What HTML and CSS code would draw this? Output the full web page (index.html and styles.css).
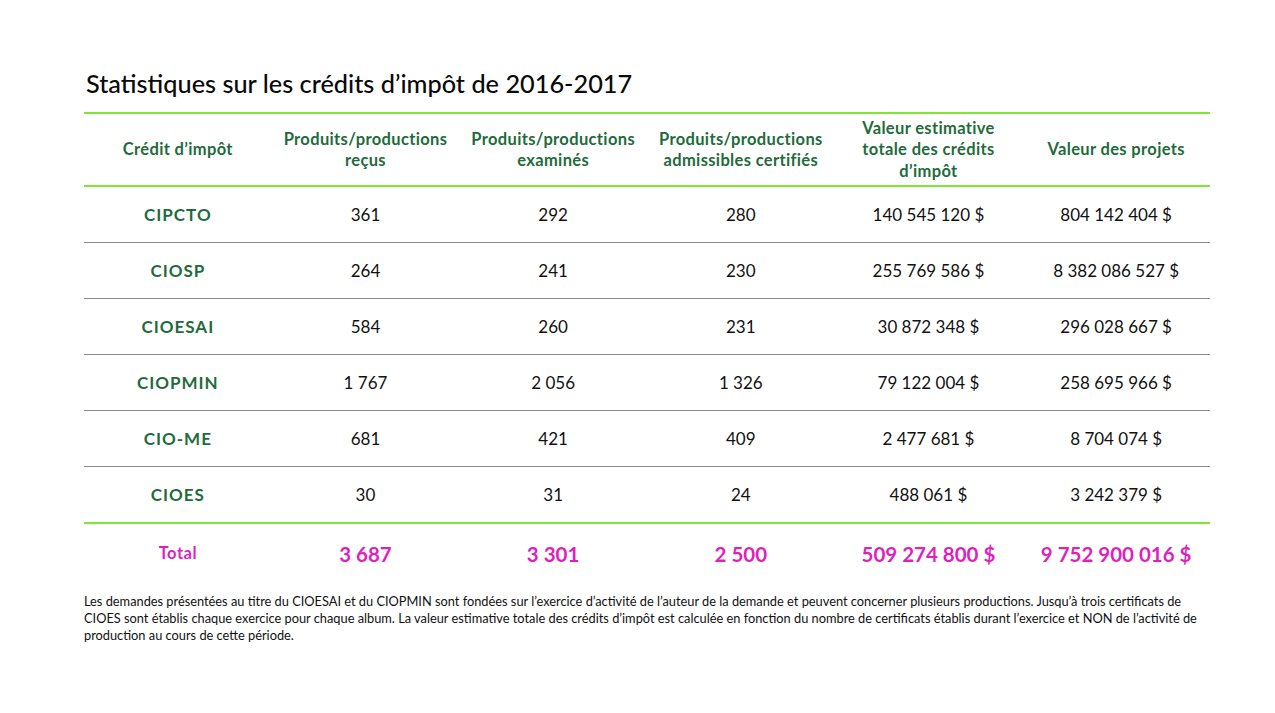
FILE: index.html
```html
<!DOCTYPE html>
<html lang="fr">
<head>
<meta charset="utf-8">
<title>Statistiques sur les crédits d'impôt de 2016-2017</title>
<link rel="stylesheet" href="styles.css">
</head>
<body>
<main class="page">
  <h1 class="title">Statistiques sur les crédits d’impôt de 2016-2017</h1>
  <table class="stats">
    <thead>
      <tr>
        <th>Crédit d’impôt</th>
        <th>Produits/productions<br>reçus</th>
        <th>Produits/productions<br>examinés</th>
        <th>Produits/productions<br>admissibles certifiés</th>
        <th>Valeur estimative<br>totale des crédits<br>d’impôt</th>
        <th>Valeur des projets</th>
      </tr>
    </thead>
    <tbody>
      <tr><td class="label">CIPCTO</td><td>361</td><td>292</td><td>280</td><td>140 545 120 $</td><td>804 142 404 $</td></tr>
      <tr><td class="label">CIOSP</td><td>264</td><td>241</td><td>230</td><td>255 769 586 $</td><td>8 382 086 527 $</td></tr>
      <tr><td class="label">CIOESAI</td><td>584</td><td>260</td><td>231</td><td>30 872 348 $</td><td>296 028 667 $</td></tr>
      <tr><td class="label">CIOPMIN</td><td>1 767</td><td>2 056</td><td>1 326</td><td>79 122 004 $</td><td>258 695 966 $</td></tr>
      <tr><td class="label">CIO-ME</td><td>681</td><td>421</td><td>409</td><td>2 477 681 $</td><td>8 704 074 $</td></tr>
      <tr><td class="label">CIOES</td><td>30</td><td>31</td><td>24</td><td>488 061 $</td><td>3 242 379 $</td></tr>
    </tbody>
    <tfoot>
      <tr><td class="total-label">Total</td><td>3 687</td><td>3 301</td><td>2 500</td><td>509 274 800 $</td><td>9 752 900 016 $</td></tr>
    </tfoot>
  </table>
  <p class="note">Les demandes présentées au titre du CIOESAI et du CIOPMIN sont fondées sur l’exercice d’activité de l’auteur de la demande et peuvent concerner plusieurs productions. Jusqu’à trois certificats de CIOES sont établis chaque exercice pour chaque album. La valeur estimative totale des crédits d’impôt est calculée en fonction du nombre de certificats établis durant l’exercice et NON de l’activité de production au cours de cette période.</p>
</main>
</body>
</html>
```
FILE: styles.css
```css
html, body {
  margin: 0;
  padding: 0;
  background: #ffffff;
}
body {
  font-family: Lato, "Noto Sans", sans-serif;
  color: #111;
}
.page {
  width: 1126px;
  margin-left: 84px;
  padding-top: 66px;
}
.title {
  margin: 0 0 0 2px;
  font-size: 25.3px;
  font-weight: 500;
  line-height: 34px;
  color: #0a0a0a;
  height: 46px;
}
.stats {
  width: 1126px;
  border-collapse: collapse;
  table-layout: fixed;
}
.stats thead th {
  border-top: 2px solid #7ce832;
  border-bottom: 2px solid #7ce832;
  height: 70px;
  padding: 1px 0 0 0;
  font-size: 16.5px;
  font-weight: 700;
  letter-spacing: 0.35px;
  line-height: 21.5px;
  color: #1f6b3c;
  text-align: center;
  vertical-align: middle;
}
.stats tbody td {
  height: 55px;
  padding: 0;
  border-bottom: 1px solid #8a8a8a;
  text-align: center;
  font-size: 17px;
  color: #111;
}
.stats tbody tr:last-child td {
  border-bottom: 2px solid #7ce832;
}
.stats td.label {
  color: #1f6b3c;
  font-weight: 700;
  letter-spacing: 1px;
}
.stats tfoot td {
  height: 58px;
  padding: 0 0 7px 0;
  text-align: center;
  color: #e01fc0;
  font-weight: 700;
  font-size: 20.5px;
}
.stats tfoot td.total-label {
  font-size: 16.5px;
  letter-spacing: 0.5px;
  padding-bottom: 8px;
}
.note {
  margin: 3px 0 0 0;
  font-size: 12.8px;
  line-height: 17px;
  color: #111;
}
```
